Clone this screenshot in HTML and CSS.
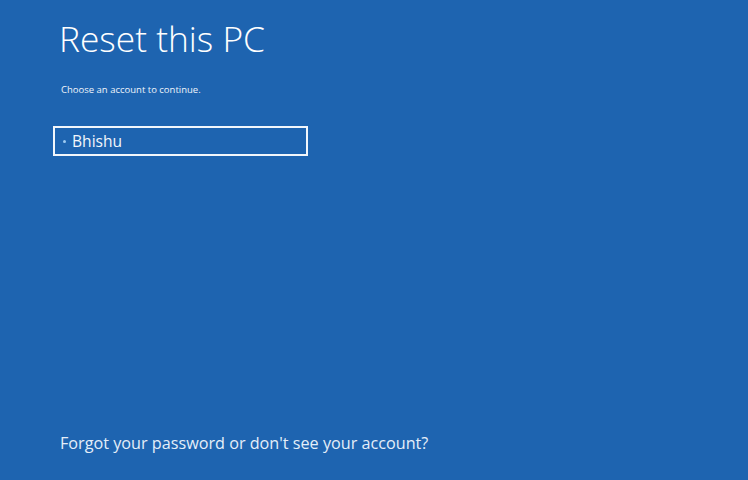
FILE: index.html
```html
<!DOCTYPE html>
<html>
<head>
<meta charset="utf-8">
<link rel="stylesheet" href="styles.css">
</head>
<body>
<main class="page">
  <section class="top">
    <h1 class="title">Reset this PC</h1>
    <p class="subtitle">Choose an account to continue.</p>
    <div class="account">
      <span class="dot"></span>
      <span class="name">Bhishu</span>
    </div>
  </section>
  <a class="forgot">Forgot your password or don't see your account?</a>
</main>
</body>
</html>
```

FILE: styles.css
```css
html, body {
  margin: 0;
  padding: 0;
  width: 748px;
  height: 480px;
  overflow: hidden;
  background: #1e64b0;
}
.page {
  box-sizing: border-box;
  height: 480px;
  display: flex;
  flex-direction: column;
  justify-content: space-between;
  padding: 14px 0 26px 53px;
  font-family: "Open Sans", "Noto Sans", sans-serif;
  color: #ffffff;
}
.top {
  display: flex;
  flex-direction: column;
  align-items: flex-start;
}
.title {
  margin: 0 0 0 6px;
  font-weight: 300;
  font-size: 35.3px;
  line-height: 48px;
  letter-spacing: 0;
}
.subtitle {
  margin: 21px 0 0 8px;
  font-size: 9.5px;
  line-height: 13px;
  color: #eef4fb;
}
.account {
  margin-top: 30px;
  box-sizing: border-box;
  width: 255px;
  height: 30px;
  border: 2px solid #f2f6fb;
  display: flex;
  align-items: center;
  gap: 6px;
  padding-left: 8px;
}
.dot {
  width: 3px;
  height: 3px;
  border-radius: 50%;
  background: #9ecbf2;
}
.name {
  font-size: 15.6px;
  color: #f2f6fb;
  line-height: 20px;
}
.forgot {
  margin-left: 7px;
  font-size: 16.2px;
  line-height: 22px;
  color: #e4eef9;
}
```
